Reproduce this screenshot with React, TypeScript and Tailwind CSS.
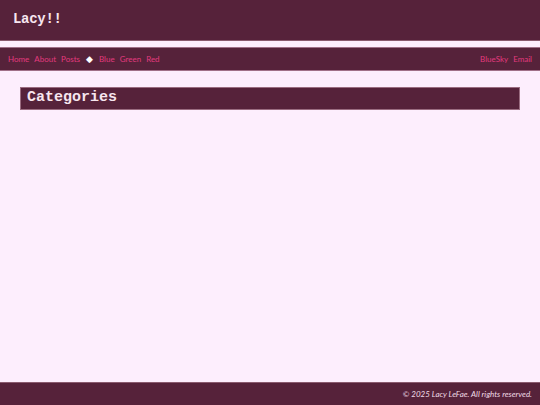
export default function App() {
  const nav = "text-[#e23a7e] no-underline";
  return (
    <div className="min-h-[405px] h-[405px] flex flex-col bg-[#fdeefd]" style={{ fontFamily: "Lato, 'Open Sans', sans-serif" }}>
      <header className="h-[41px] bg-[#56223a] border-b border-[#8a5a6e] flex items-center px-[13px]">
        <span className="text-[#f7e6ef] text-[14px] font-bold tracking-[-0.3px] pb-[2px]" style={{ fontFamily: "'Liberation Mono', 'DejaVu Sans Mono', monospace" }}>Lacy!!</span>
      </header>
      <div className="h-[6px]" />
      <nav className="h-[24px] bg-[#56223a] border-y border-[#a07088] flex items-center justify-between px-[8px] text-[8px]">
        <div className="flex items-center gap-[5px]">
          <a className={nav}>Home</a>
          <a className={nav}>About</a>
          <a className={nav}>Posts</a>
          <span className="text-white text-[9px] mx-[1px]">◆</span>
          <a className={nav}>Blue</a>
          <a className={nav}>Green</a>
          <a className={nav}>Red</a>
        </div>
        <div className="flex items-center gap-[5px]">
          <a className={nav}>BlueSky</a>
          <a className={nav}>Email</a>
        </div>
      </nav>
      <main className="flex-1 px-[20px] pt-[16px]">
        <div className="h-[23px] bg-[#56223a] border border-[#9a6c80] flex items-center px-[6px]">
          <span className="text-[#f7e6ef] text-[15px] font-bold" style={{ fontFamily: "'Liberation Mono', 'DejaVu Sans Mono', monospace" }}>Categories</span>
        </div>
      </main>
      <footer className="h-[23px] bg-[#56223a] border-t border-[#8a5a6e] flex items-center justify-end px-[8px]">
        <span className="text-[#f0dce6] text-[8px] italic">© 2025 Lacy LeFae. All rights reserved.</span>
      </footer>
    </div>
  );
}
